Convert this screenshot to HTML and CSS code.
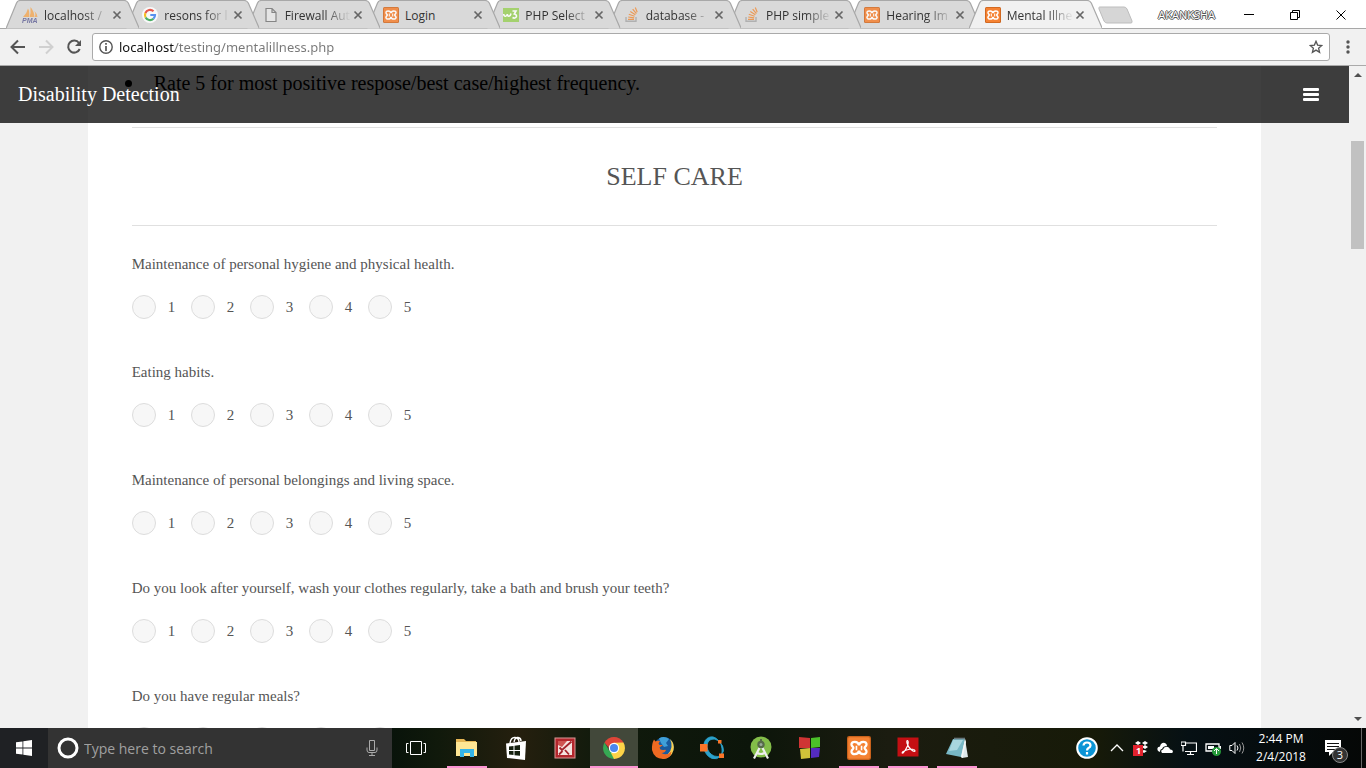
FILE: index.html
```html
<!DOCTYPE html>
<html lang="en">
<head>
<meta charset="utf-8">
<title>Mental Illness</title>
<link rel="stylesheet" href="styles.css">
</head>
<body>
<svg class="sprites" aria-hidden="true">
  <symbol id="tab" viewBox="0 0 133 29" preserveAspectRatio="none"><path d="M0 28.5 10.500 3Q11.500.5 14 .5H118Q120.500.5 122 3L133 28.500" stroke="#a8a8a8" stroke-width="1.200"/></symbol>
  <symbol id="close" viewBox="0 0 10 10"><path d="M1.500 1.500 8.500 8.500M8.500 1.500 1.500 8.500" stroke="#666" stroke-width="1.700"/></symbol>
  <symbol id="xampp" viewBox="0 0 16 16"><rect width="16" height="16" rx="1.500" fill="#c9621c"/><rect x=".8" y=".8" width="14.400" height="14.400" rx="1" fill="#f58233"/><path d="M8 6.200C7.500 3.200 2.700 3.200 3 5.800 3.100 7 4.300 7.200 4.300 8S3.100 9 3 10.200C2.700 12.800 7.500 12.800 8 9.800 8.500 12.800 13.300 12.800 13 10.200 12.900 9 11.700 8.800 11.700 8S12.900 7 13 5.800C13.300 3.200 8.500 3.200 8 6.200Z" fill="none" stroke="#fff" stroke-width="1.500"/><path d="M6.300 6.500V9.500M9.700 6.500V9.500" stroke="#fff" stroke-width="1.100"/></symbol>
  <symbol id="so" viewBox="0 0 16 16"><path d="M2 10V14.300H12V10" fill="none" stroke="#aaa" stroke-width="1.400"/><path d="M4 12.300H10M4.200 10 10.200 10.800M4.800 7.300 10.600 9.200M6.300 4.500 11.400 7.800M8.700 2.200 12.400 6.600M11.300.6 13.200 5.200" stroke="#f09040" stroke-width="1.200"/></symbol>
</svg>
<div class="window">
  <header class="strip">
    <nav class="tabs" aria-label="Tabs">
      <div class="tab"><svg class="shape"><use href="#tab"/></svg>
        <svg class="fav" viewBox="0 0 16 16"><path d="M1 10Q5 6 6 1.500 8 5 7 10ZM7.500 10Q9 6 8.500 0 12 4 12.500 10ZM13 10Q14 7 12.500 4 15.500 7 15.500 10Z" fill="#f2ab5c"/><text x="0" y="16" font-family="Liberation Sans" font-size="7" font-weight="bold" font-style="italic" fill="#66679a">PMA</text></svg>
        <span class="title">localhost /</span><button class="x" aria-label="Close tab"><svg><use href="#close"/></svg></button></div>
      <div class="tab"><svg class="shape"><use href="#tab"/></svg>
        <svg class="fav" viewBox="0 0 16 16"><circle cx="8" cy="8" r="8" fill="#fff"/><g fill="none" stroke-width="2.200"><path d="M3.400 6A5 5 0 0 1 11.500 4.300" stroke="#ea4335"/><path d="M3.400 6A5 5 0 0 0 3.600 10.400" stroke="#fbbc05"/><path d="M3.600 10.400A5 5 0 0 0 11.400 11.700" stroke="#34a853"/><path d="M11.400 11.700A5 5 0 0 0 13 8H8.300" stroke="#4285f4"/></g></svg>
        <span class="title">resons for l</span><button class="x" aria-label="Close tab"><svg><use href="#close"/></svg></button></div>
      <div class="tab"><svg class="shape"><use href="#tab"/></svg>
        <svg class="fav" viewBox="0 0 16 16"><path d="M3 1.500H9L13 5.500V14.500H3ZM9 1.500V5.500H13" fill="#e8e8e8" stroke="#777" stroke-width="1.200"/></svg>
        <span class="title">Firewall Aut</span><button class="x" aria-label="Close tab"><svg><use href="#close"/></svg></button></div>
      <div class="tab"><svg class="shape"><use href="#tab"/></svg><svg class="fav"><use href="#xampp"/></svg>
        <span class="title short">Login</span><button class="x" aria-label="Close tab"><svg><use href="#close"/></svg></button></div>
      <div class="tab"><svg class="shape"><use href="#tab"/></svg>
        <svg class="fav" viewBox="0 0 16 16"><rect y="1" width="16" height="14" fill="#9bd05c"/><path d="M.7 7Q1 9.500 2.500 9.300 4 9 4.300 7 4.500 9.300 6 9.200 7.500 9 8 6.500M9.500 4H13L11.300 7Q14 7.500 13.300 9.800 12 12 9.500 10.500" fill="none" stroke="#fff" stroke-width="1.600"/></svg>
        <span class="title">PHP Select</span><button class="x" aria-label="Close tab"><svg><use href="#close"/></svg></button></div>
      <div class="tab"><svg class="shape"><use href="#tab"/></svg><svg class="fav"><use href="#so"/></svg>
        <span class="title">database -</span><button class="x" aria-label="Close tab"><svg><use href="#close"/></svg></button></div>
      <div class="tab"><svg class="shape"><use href="#tab"/></svg><svg class="fav"><use href="#so"/></svg>
        <span class="title">PHP simple</span><button class="x" aria-label="Close tab"><svg><use href="#close"/></svg></button></div>
      <div class="tab"><svg class="shape"><use href="#tab"/></svg><svg class="fav"><use href="#xampp"/></svg>
        <span class="title">Hearing Im</span><button class="x" aria-label="Close tab"><svg><use href="#close"/></svg></button></div>
      <div class="tab active"><svg class="shape"><use href="#tab"/></svg><svg class="fav"><use href="#xampp"/></svg>
        <span class="title">Mental Illne</span><button class="x" aria-label="Close tab"><svg><use href="#close"/></svg></button></div>
    </nav>
    <button class="newtab" aria-label="New tab"><svg width="36" height="18" viewBox="0 0 36 18"><path d="M1.500 1H26Q28 1 29 3L34 15Q34.500 17 33 17H9Q7 17 6 15L1 3Q.5 1 1.500 1Z" fill="#d6d6d6" stroke="#bdbdbd"/></svg></button>
    <span class="profile">AKANKSHA</span>
    <div class="controls">
      <button aria-label="Minimize"><svg viewBox="0 0 12 12"><path d="M1 5.500H11"/></svg></button>
      <button aria-label="Restore"><svg viewBox="0 0 12 12"><path d="M1.500 3.500H8.500V10.500H1.500ZM3.500 3.500V1.500H10.500V8.500H8.500"/></svg></button>
      <button aria-label="Close"><svg viewBox="0 0 12 12"><path d="M1.500 1.500 10.500 10.500M10.500 1.500 1.500 10.500"/></svg></button>
    </div>
  </header>
  <div class="toolbar">
    <button class="tool" aria-label="Back"><svg viewBox="0 0 16 16"><path d="M15 8H2M8 1.500 1.500 8 8 14.500" fill="none" stroke="#555" stroke-width="2"/></svg></button>
    <button class="tool" aria-label="Forward"><svg viewBox="0 0 16 16"><path d="M1 8H14M8 1.500 14.500 8 8 14.500" fill="none" stroke="#d0d0d0" stroke-width="2"/></svg></button>
    <button class="tool" aria-label="Reload"><svg viewBox="0 0 16 16"><path d="M13 4A6 6 0 1 0 13.700 10" fill="none" stroke="#555" stroke-width="2"/><path d="M15 1V7H9Z" fill="#555"/></svg></button>
    <div class="omnibox">
      <svg width="14" height="14" viewBox="0 0 14 14"><circle cx="7" cy="7" r="6.200" fill="none" stroke="#555" stroke-width="1.400"/><path d="M7 3V4.800M7 6V11" stroke="#555" stroke-width="1.700"/></svg>
      <input class="url" type="text" aria-label="Address" value="localhost/testing/mentalillness.php">
      <button class="star" aria-label="Bookmark this page"><svg width="14" height="14" viewBox="0 0 14 14"><path d="M7 1.300 8.600 5.100 12.800 5.500 9.600 8.200 10.600 12.300 7 10.100 3.400 12.300 4.400 8.200 1.200 5.500 5.400 5.100Z" fill="none" stroke="#555" stroke-width="1.300"/></svg></button>
    </div>
    <button class="more" aria-label="Menu"><svg width="4" height="14" viewBox="0 0 4 14"><g fill="#555"><circle cx="2" cy="2" r="1.700"/><circle cx="2" cy="7" r="1.700"/><circle cx="2" cy="12" r="1.700"/></g></svg></button>
  </div>
  <div class="viewport">
    <div class="page">
      <div class="navbar">
        <a class="brand" href="#">Disability Detection</a>
        <button class="burger" aria-label="Open menu"><i></i><i></i><i></i></button>
      </div>
      <main class="sheet">
        <ul class="notes"><li>Rate 5 for most positive respose/best case/highest frequency.</li></ul>
        <hr>
        <h2>SELF CARE</h2>
        <hr>
        <form class="survey">
          <fieldset><legend>Maintenance of personal hygiene and physical health.</legend>
            <div class="scale"><label><input type="radio" name="q1">1</label><label><input type="radio" name="q1">2</label><label><input type="radio" name="q1">3</label><label><input type="radio" name="q1">4</label><label><input type="radio" name="q1">5</label></div></fieldset>
          <fieldset><legend>Eating habits.</legend>
            <div class="scale"><label><input type="radio" name="q2">1</label><label><input type="radio" name="q2">2</label><label><input type="radio" name="q2">3</label><label><input type="radio" name="q2">4</label><label><input type="radio" name="q2">5</label></div></fieldset>
          <fieldset><legend>Maintenance of personal belongings and living space.</legend>
            <div class="scale"><label><input type="radio" name="q3">1</label><label><input type="radio" name="q3">2</label><label><input type="radio" name="q3">3</label><label><input type="radio" name="q3">4</label><label><input type="radio" name="q3">5</label></div></fieldset>
          <fieldset><legend>Do you look after yourself, wash your clothes regularly, take a bath and brush your teeth?</legend>
            <div class="scale"><label><input type="radio" name="q4">1</label><label><input type="radio" name="q4">2</label><label><input type="radio" name="q4">3</label><label><input type="radio" name="q4">4</label><label><input type="radio" name="q4">5</label></div></fieldset>
          <fieldset><legend>Do you have regular meals?</legend>
            <div class="scale"><label><input type="radio" name="q5">1</label><label><input type="radio" name="q5">2</label><label><input type="radio" name="q5">3</label><label><input type="radio" name="q5">4</label><label><input type="radio" name="q5">5</label></div></fieldset>
        </form>
      </main>
    </div>
    <div class="scrollbar">
      <svg width="8" height="4" viewBox="0 0 8 4"><path d="M0 4 4 0 8 4Z" fill="#505050"/></svg>
      <div class="track"><div class="thumb"></div></div>
      <svg width="8" height="4" viewBox="0 0 8 4"><path d="M0 0 4 4 8 0Z" fill="#505050"/></svg>
    </div>
  </div>
  <footer class="taskbar">
    <button class="start" aria-label="Start"><svg width="16" height="16" viewBox="0 0 16 16"><path d="M0 2.300 6.500 1.400V7.600H0ZM7.300 1.300 16 0V7.600H7.300ZM0 8.400H6.500V14.600L0 13.700ZM7.300 8.400H16V16L7.300 14.700Z" fill="#fff"/></svg></button>
    <div class="search">
      <svg width="22" height="22" viewBox="0 0 22 22"><circle cx="11" cy="11" r="9" fill="none" stroke="#fff" stroke-width="3"/></svg>
      <input type="text" aria-label="Search" placeholder="Type here to search">
      <svg width="12" height="18" viewBox="0 0 12 18"><path d="M3.500 1.500H8.500V11.500H3.500ZM1 8.500V11Q1 13.500 3 13.500H9Q11 13.500 11 11V8.500M6 13.500V16.500M3 16.500H9" fill="none" stroke="#aaa"/></svg>
    </div>
    <button class="taskview" aria-label="Task view"><svg width="20" height="14" viewBox="0 0 20 14"><path d="M4.500.5H15.500V13.500H4.500ZM2.500 2.500H.5V11.500H2.500M17.500 2.500H19.500V11.500H17.500" fill="none" stroke="#fff"/></svg></button>
    <div class="apps">
      <button class="app open" aria-label="File Explorer"><svg viewBox="0 0 24 24"><path d="M1 3H9L11 5H21V9H1Z" fill="#e6b655"/><path d="M1 6H22V20H1Z" fill="#ffe694"/><path d="M5 13H19V21H15V17H9V21H5Z" fill="#35b4e8"/></svg></button>
      <button class="app" aria-label="Store"><svg viewBox="0 0 24 24"><path d="M6 7Q7 1 11 1.500 15 2 15 6M10 6Q11 1 14 1.500 17 2 17 5" fill="none" stroke="#fff" stroke-width="1.400"/><path d="M2 7.500 22 5 21 24 3 22Z" fill="#fff"/><path d="M5 10.500 9.500 10V14H5ZM10.500 9.800 16 9V14H10.500ZM5 15H9.500V19L5 18.500ZM10.500 15H16V19.800L10.500 19.200Z" fill="#15200e"/></svg></button>
      <button class="app" aria-label="Picture Manager"><svg viewBox="0 0 24 24"><rect x="2" y="2" width="20" height="20" fill="#b3262c" stroke="#d99a98"/><rect x="5" y="5" width="14" height="14" fill="#f6e3e0"/><path d="M5 5H14L9 11 5 9Z" fill="#cf5552"/><path d="M18.500 5.500 9 14 6.500 11.500M12 14 16 18.500M6 18.500 9.500 15" fill="none" stroke="#a3222a" stroke-width="1.800"/></svg></button>
      <button class="app current" aria-label="Chrome"><svg viewBox="0 0 24 24"><path d="M12 12 2.500 6.500A11 11 0 0 1 21.500 6.500Z" fill="#de4538"/><path d="M12 12V6.500H21.500A11 11 0 0 1 12 23Z" fill="#fdd348"/><path d="M12 12 12 23A11 11 0 0 1 2.500 6.500L7.200 14.700Z" fill="#36a853"/><path d="M2.500 6.500H21.500L12 7 8 13Z" fill="#de4538"/><path d="M16.700 14.700 12 23 9 17Z" fill="#fdd348"/><circle cx="12" cy="12" r="5.200" fill="#fff"/><circle cx="12" cy="12" r="4" fill="#4b86ee"/></svg></button>
      <button class="app" aria-label="Firefox"><svg viewBox="0 0 24 24"><circle cx="13" cy="11" r="10" fill="#195b9e"/><path d="M8 2.500Q13-.5 18 3L15 7 17 10 13 11 10 7Z" fill="#3fa0d8"/><path d="M19 3Q24 8 22.500 14 20.500 22 12 23L10 20Q19 20 20.500 11 21 7 19 3Z" fill="#fbd04f"/><path d="M3 3.500 4.500 5.500Q6.500 4.500 9 5L7.500 7.500 8.500 9H12L8.500 11.500Q9 14.500 12.500 14 14.500 13.500 15 14 14 17 10.500 17 16 20 20.500 15.500 20 23 12 23 3 22.500 1 14 .5 8 3 3.500Z" fill="#ee6a22"/></svg></button>
      <button class="app" aria-label="Octave"><svg viewBox="0 0 24 24"><path d="M19 5Q13-2 7 2.500 3 6 4 13 6 20 12 22.500 17 24 21 20 18 21 14 20 8 17 7 11 7 5 11 3.500 14 2 19 5ZM19 5Q24 10 23.500 15L21 20Q24 12 19 5Z" fill="#2ba2cc" stroke="#2ba2cc" stroke-width=".8"/><path d="M0 8H7.500V15.500H0ZM18 4H21.500V7.500H18ZM19 17.500H24V22H19Z" fill="#fb7528"/></svg></button>
      <button class="app" aria-label="Android Studio"><svg viewBox="0 0 24 24"><circle cx="12" cy="11" r="10.500" fill="#83bd49"/><path d="M12 9 5 22.500M12 9 19 22.500M7.500 16.500Q12 19.500 16.500 16.500" fill="none" stroke="#eee" stroke-width="2.200"/><circle cx="12" cy="8.500" r="3.700" fill="#566b48"/><circle cx="12" cy="8.500" r="1.500" fill="#9aa79a"/><path d="M11 3H13V6H11Z" fill="#566b48"/></svg></button>
      <button class="app" aria-label="Color tool"><svg viewBox="0 0 24 24"><path d="M1 1 12 2V12H1Z" fill="#cf3434"/><path d="M13 2 22 1V11L13 12Z" fill="#4bc029"/><path d="M2 13 12 12V22L3 23Z" fill="#d0c239"/><path d="M13 12H22L21 21 13 22Z" fill="#542bc0"/></svg></button>
      <button class="app open" aria-label="XAMPP"><svg><use href="#xampp"/></svg></button>
      <button class="app open" aria-label="Acrobat Reader"><svg viewBox="0 0 24 24"><rect x="1.500" y="1.500" width="21" height="19" fill="#c40f13"/><path d="M11.500 4.500Q10.500 4.500 11 7 12 11 15 13.500 18 16 19 15 19 13 14.500 13 9 14 6.500 16 5.500 17.500 7 17 9.500 14.500 11.500 10 13 5 11.500 4.500Z" fill="none" stroke="#fff" stroke-width="1.200"/></svg></button>
      <button class="app open" aria-label="Notepad"><svg viewBox="0 0 24 24"><path d="M20 3 23 21 17 22 15 19Z" fill="#dfe8ea"/><path d="M8 3 20 3 16 21 1 18Z" fill="#78b8c6"/><path d="M8 4 18 4 12 14 4 15Z" fill="#a9d6df"/><path d="M20 3 16 21 17.500 22 21 6Z" fill="#f4f7f7"/><path d="M9 2.500H20" stroke="#66757a" stroke-width="1.600"/></svg></button>
    </div>
    <div class="tray">
      <button class="help" aria-label="Help"><svg viewBox="0 0 22 22"><circle cx="11" cy="11" r="9.800" fill="#0a94d6" stroke="#fff" stroke-width="2"/><path d="M7.500 8.500Q7.800 5.500 11 5.500 14.500 5.500 14.500 8.500 14.500 10 12.500 11 11 12 11 13.500M11 15V17.500" fill="none" stroke="#fff" stroke-width="2.200"/></svg></button>
      <button aria-label="Show hidden icons"><svg viewBox="0 0 16 16"><path d="M2 11 8 5 14 11" fill="none" stroke="#fff" stroke-width="1.300"/></svg></button>
      <button aria-label="Dropbox"><svg viewBox="0 0 16 16"><path d="M5 1 8 3 5 5 2 3ZM12 1 15 3 12 5 9 3ZM12 5 15 7 12 9 9 7ZM11 10 14 11 11 13 8 11Z" fill="#fff"/><rect y="5" width="10" height="11" fill="#e3222d"/><text x="3" y="14" font-family="Open Sans" font-size="9" font-weight="bold" fill="#fff">1</text></svg></button>
      <button aria-label="OneDrive"><svg viewBox="0 0 16 16"><path d="M1 11Q-1 7 3 6.500 4 2 8 3 10 4 10 6 6 6 5 9 3 9 3 12Z" fill="#fff"/><path d="M5 13Q3 10 6 9.500 7 6 11 7 13 8 13 9.500 16 9 16 12L15 13Z" fill="#fff"/></svg></button>
      <button aria-label="Network"><svg viewBox="0 0 16 16"><path d="M5 3H15.500V11.500H4M0 2H4.500V5.500H0ZM2 5.500V11.500M9.500 11.500V14.500M6 14.500H13" fill="none" stroke="#fff" stroke-width="1.200"/></svg></button>
      <button aria-label="Battery"><svg viewBox="0 0 16 16"><path d="M1 4H14V11H1Z" fill="none" stroke="#fff" stroke-width="1.300"/><path d="M3 6H9V9H3ZM14.500 6H16V9H14.500Z" fill="#fff"/><circle cx="11.500" cy="11.500" r="4.500" fill="#269b3a"/><path d="M11.500 9V14M9 11 11.500 8.500 14 11" stroke="#fff" fill="none"/></svg></button>
      <button aria-label="Volume"><svg viewBox="0 0 16 16"><path d="M.8 5.500H3L6 2.500V13.500L3 10.500H.8Z" fill="none" stroke="#fff"/><path d="M8 5.500Q10 8 8 10.500" fill="none" stroke="#fff"/><path d="M10.500 4Q13 8 10.500 12M13 2.500Q16.500 8 13 13.500" fill="none" stroke="#999"/></svg></button>
      <time class="clock" datetime="2018-02-04T14:44">2:44 PM<br>2/4/2018</time>
      <button class="notify" aria-label="3 notifications"><svg viewBox="0 0 24 24"><path d="M0 4H16V16H8L4 20V16H0Z" fill="#fff"/><path d="M2 7.500H14M2 10.500H14M2 13.500H10" stroke="#111"/></svg><b>3</b></button>
      <div class="peek"></div>
    </div>
  </footer>
</div>
</body>
</html>
```
FILE: styles.css
```css
* { box-sizing: border-box; }
body { margin: 0; font-family: "Open Sans", "Noto Sans", sans-serif; }
button { border: 0; padding: 0; background: none; font: inherit; color: inherit; display: flex; align-items: center; justify-content: center; }
input { font: inherit; }
.sprites { position: absolute; width: 0; height: 0; }
.window { display: flex; flex-direction: column; height: 100vh; overflow: hidden; }

/* Tab strip */
.strip { display: flex; align-items: center; height: 29px; flex: none; background: linear-gradient(#fff 28px, #a8a8a8 28px); }
.tabs { display: flex; flex: 0 1 1096px; min-width: 0; margin-left: 6px; isolation: isolate; }
.tab { position: relative; display: flex; flex: 1; align-items: center; min-width: 0; height: 29px; padding: 1px 17px 0 16px; z-index: 1; }
.tab + .tab { margin-left: -13px; }
.tab:nth-child(1) { z-index: 9; }
.tab:nth-child(2) { z-index: 8; }
.tab:nth-child(3) { z-index: 7; }
.tab:nth-child(4) { z-index: 6; }
.tab:nth-child(5) { z-index: 5; }
.tab:nth-child(6) { z-index: 4; }
.tab:nth-child(7) { z-index: 3; }
.tab:nth-child(8) { z-index: 2; }
.tab.active { z-index: 10; }
.shape { position: absolute; inset: 0; width: 100%; height: 100%; fill: #d9d9d9; z-index: -1; }
.active .shape { fill: #f1f1f1; }
.fav { width: 16px; height: 16px; flex: none; opacity: .85; }
.active .fav { opacity: 1; }
.title { flex: 1; min-width: 0; margin: 0 2px 0 6px; white-space: nowrap; font-size: 12px; color: #333; mask-image: linear-gradient(90deg, #000 60%, rgba(0, 0, 0, .1) 95%); }
.title.short { mask-image: none; }
.x { width: 10px; height: 10px; flex: none; }
.x svg { width: 10px; height: 10px; }
.newtab { margin-left: -4px; }
.profile { margin-left: auto; margin-right: 11px; font-size: 11px; color: #fff; text-shadow: 1px 0 #555, -1px 0 #555, 0 1px #555, 0 -1px #555; }
.controls { display: flex; margin-right: 2px; }
.controls button { width: 46px; height: 28px; }
.controls svg { width: 12px; height: 12px; fill: none; stroke: #000; }

/* Toolbar */
.toolbar { display: flex; align-items: center; height: 37px; flex: none; padding-left: 4px; background: #f1f1f1; border-bottom: 1px solid #aaa; }
.tool { width: 28px; height: 28px; }
.tool svg { width: 16px; height: 16px; }
.omnibox { display: flex; align-items: center; flex: 1; height: 28px; margin-left: 4px; padding: 0 6px; background: #fff; border: 1px solid #aaa; border-radius: 3px; }
.url { flex: 1; min-width: 0; height: 24px; margin-left: 6px; padding: 0; border: 0; outline: 0; font-family: "Noto Sans", "Open Sans", sans-serif; font-size: 13px; color: transparent; background: linear-gradient(90deg, #111 56px, #777 56px); -webkit-background-clip: text; background-clip: text; }
.more { width: 36px; height: 28px; }

/* Web page */
.viewport { display: flex; flex: 1; min-height: 0; }
.page { position: relative; flex: 1; min-width: 0; overflow: hidden; background: #f1f1f1; font-family: "Liberation Serif", serif; color: #555; }
.navbar { position: absolute; top: 0; left: 0; right: 0; z-index: 2; display: flex; align-items: center; justify-content: space-between; height: 57px; padding: 0 30px 0 18px; background: rgba(0, 0, 0, .75); }
.brand { font-size: 20px; color: #fff; text-decoration: none; }
.burger { flex-direction: column; gap: 2px; width: 16px; }
.burger i { width: 16px; height: 3px; border-radius: 1px; background: #fff; }
.sheet { margin: 0 auto; width: 87%; min-height: 100%; padding: 2px 44px 0; background: #fff; }
.notes { margin: 0; padding: 0; list-style: none; font-size: 20px; line-height: 30px; color: #000; }
.notes li { display: flex; align-items: center; margin: 0 0 29px -7px; }
.notes li::before { content: ""; width: 7px; height: 7px; margin-right: 22px; border-radius: 50%; background: #000; }
hr { margin: 0; border: 0; border-top: 1px solid #e0e0e0; }
h2 { margin: 30px 0; font-size: 26px; line-height: 37px; font-weight: 400; text-align: center; }
.survey { padding-top: 26px; font-size: 15px; line-height: 24px; }
fieldset { margin: 0 0 41px; padding: 0; border: 0; }
legend { padding: 0; margin-bottom: 19px; }
.scale { display: flex; gap: 15px; }
.scale label { display: flex; align-items: center; gap: 12px; width: 44px; line-height: 22px; }
.scale input { appearance: none; width: 24px; height: 24px; flex: none; margin: 0; border: 1px solid #ddd; border-radius: 50%; background: #f7f7f7; }
.scale input:checked { background: #555; }
.scrollbar { display: flex; flex-direction: column; align-items: center; width: 17px; padding: 7px 0; background: #f1f1f1; }
.track { flex: 1; width: 13px; padding-top: 64px; }
.thumb { height: 108px; background: #c1c1c1; }

/* Taskbar */
.taskbar { display: flex; height: 40px; flex: none; color: #fff; background: linear-gradient(90deg, #07120a 28%, #10190b 32%, #251f0e 38%, #101a0c 44%, #0c150a 55%, #1b1c10 65%, #171a08 80%, #061014 87%, #050706 100%); }
.start { width: 48px; background: #1f2124; }
.search { display: flex; align-items: center; width: 344px; padding: 0 14px 0 9px; background: #333; }
.search input { flex: 1; min-width: 0; padding: 0; margin-left: 5px; border: 0; outline: 0; background: none; color: #fff; font-size: 14px; }
.search input::placeholder { color: #a0a0a0; opacity: 1; }
.taskview { width: 48px; margin-right: 3px; }
.apps { display: flex; gap: 1px; }
.app { position: relative; width: 48px; }
.app svg { width: 24px; height: 24px; }
.open::after, .current::after { content: ""; position: absolute; left: 4px; right: 4px; bottom: 0; height: 2px; background: #fb93d2; }
.current { background: #42483a; }
.current::after { left: 0; right: 0; }
.tray { display: flex; margin-left: auto; }
.tray button { width: 24px; }
.tray svg { width: 16px; height: 16px; }
.tray .help { width: 36px; }
.help svg { width: 22px; height: 22px; }
.clock { width: 64px; padding-top: 2px; font-size: 12px; line-height: 18px; text-align: center; }
.tray .notify { position: relative; width: 48px; }
.tray .notify svg { width: 24px; height: 24px; }
.notify b { position: absolute; left: 19px; top: 19px; width: 16px; height: 16px; border: 1px solid #888; border-radius: 50%; background: #333; font-size: 11px; line-height: 14px; font-weight: 400; text-align: center; }
.peek { width: 5px; border-left: 1px solid #666; }
```
